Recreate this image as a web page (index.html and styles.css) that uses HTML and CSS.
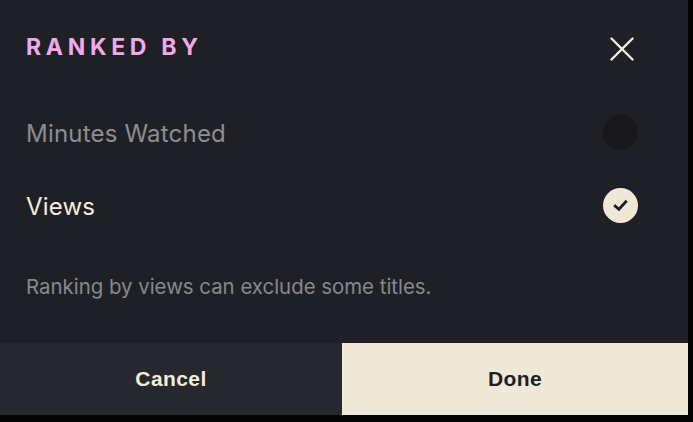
FILE: index.html
```html
<!DOCTYPE html>
<html lang="en">
<head>
    <meta charset="UTF-8">
    <meta name="viewport" content="width=device-width, initial-scale=1.0">
    <title>Ranked By</title>
    <link rel="stylesheet" href="styles.css">
</head>
<body>
    <div class="sheet">
        <div class="sheet-header">
            <div class="sheet-title">RANKED BY</div>
            <button class="close-button" aria-label="Close">
                <svg width="24" height="24" viewBox="0 0 24 24" fill="none" stroke="currentColor" stroke-width="2.4" stroke-linecap="round">
                    <line x1="1.5" y1="1.5" x2="22.5" y2="22.5"/>
                    <line x1="22.5" y1="1.5" x2="1.5" y2="22.5"/>
                </svg>
            </button>
        </div>

        <div class="option-list">
            <div class="option">
                <span class="option-label">Minutes Watched</span>
                <span class="radio"></span>
            </div>
            <div class="option selected">
                <span class="option-label">Views</span>
                <span class="radio">
                    <svg width="17" height="17" viewBox="0 0 16 16" fill="none" stroke="currentColor" stroke-width="2.6" stroke-linecap="square">
                        <polyline points="3 8.5 6.5 11.5 13 4.5"/>
                    </svg>
                </span>
            </div>
        </div>

        <p class="note">Ranking by views can exclude some titles.</p>

        <div class="sheet-footer">
            <button class="footer-button cancel">Cancel</button>
            <button class="footer-button done">Done</button>
        </div>
    </div>
</body>
</html>
```

FILE: styles.css
```css
body, html {
    margin: 0;
    padding: 0;
    height: 100%;
    background: #050505;
    font-family: Inter, "Noto Sans", sans-serif;
}

.sheet {
    display: flex;
    flex-direction: column;
    width: 688px;
    height: 415px;
    background: #1f2025;
}

.sheet-header {
    display: flex;
    align-items: center;
    justify-content: space-between;
    height: 96px;
    padding: 0 54px 0 26px;
}

.sheet-title {
    font-size: 23px;
    font-weight: 700;
    letter-spacing: 4.7px;
    color: #f1a9ea;
    margin-top: -2px;
}

.close-button {
    display: flex;
    padding: 0;
    margin-top: 1px;
    border: none;
    background: none;
    color: #f6f1e6;
    cursor: pointer;
}

.option-list {
    display: flex;
    flex-direction: column;
}

.option {
    display: flex;
    align-items: center;
    justify-content: space-between;
    height: 73px;
    padding: 0 50px 0 26px;
}

.option-label {
    font-size: 24px;
    letter-spacing: 0.2px;
    color: #8d8d92;
    padding-top: 2px;
}

.option.selected .option-label {
    color: #f3eddd;
}

.radio {
    display: flex;
    align-items: center;
    justify-content: center;
    width: 35px;
    height: 35px;
    border-radius: 50%;
    background: #18181c;
}

.option.selected .radio {
    background: #efe8d6;
    color: #1f2025;
}

.note {
    margin: 32px 0 0;
    padding: 0 26px;
    font-size: 20.4px;
    color: #88888d;
}

.sheet-footer {
    display: flex;
    margin-top: auto;
    height: 72px;
}

.footer-button {
    flex: 1;
    border: none;
    font-family: "Liberation Sans", Arial, sans-serif;
    font-size: 21px;
    font-weight: 700;
    letter-spacing: 0.4px;
    cursor: pointer;
}

.footer-button.cancel {
    flex: 0 0 342px;
    background: #27282e;
    color: #f2ecdc;
}

.footer-button.done {
    background: #efe8d6;
    color: #1f2025;
}
```
